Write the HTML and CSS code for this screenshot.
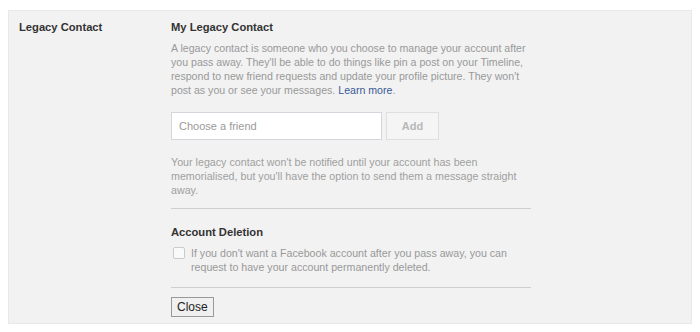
FILE: index.html
```html
<!DOCTYPE html>
<html>
<head>
<meta charset="utf-8">
<link rel="stylesheet" href="styles.css">
</head>
<body>
<div class="panel">
  <div class="label">Legacy Contact</div>
  <div class="content">
    <div class="title">My Legacy Contact</div>
    <p class="desc">A legacy contact is someone who you choose to manage your account after you pass away. They'll be able to do things like pin a post on your Timeline, respond to new friend requests and update your profile picture. They won't post as you or see your messages. <a class="link" href="#">Learn more</a>.</p>
    <div class="picker">
      <div class="input">Choose a friend</div>
      <div class="add">Add</div>
    </div>
    <p class="note">Your legacy contact won't be notified until your account has been memorialised, but you'll have the option to send them a message straight away.</p>
    <div class="divider"></div>
    <div class="title title2">Account Deletion</div>
    <div class="check-row">
      <span class="checkbox"></span>
      <span class="check-text">If you don't want a Facebook account after you pass away, you can request to have your account permanently deleted.</span>
    </div>
    <div class="divider divider2"></div>
    <div class="close">Close</div>
  </div>
</div>
</body>
</html>
```

FILE: styles.css
```css
html, body {
  margin: 0;
  padding: 0;
  background: #ffffff;
  font-family: "Liberation Sans", Arial, sans-serif;
  font-size: 11px;
}

.panel {
  margin: 10px 8px 0 8px;
  width: 682px;
  height: 312px;
  background: #f2f2f2;
  border: 1px solid #e8e8e8;
  display: flex;
}

.label {
  width: 152px;
  padding: 8px 0 0 10px;
  font-weight: bold;
  font-size: 11.2px;
  color: #333333;
  line-height: 16px;
}

.content {
  width: 360px;
  padding-top: 8px;
}

.title {
  font-weight: bold;
  font-size: 11.2px;
  color: #333333;
  line-height: 16px;
}

.desc {
  margin: 6px 0 0 0;
  font-size: 10.6px;
  color: #999999;
  line-height: 14px;
}

.link {
  color: #3b5998;
  text-decoration: none;
}

.picker {
  display: flex;
  gap: 4px;
  margin-top: 15px;
}

.input {
  width: 202px;
  height: 26px;
  background: #ffffff;
  border: 1px solid #d3d6db;
  padding-left: 7px;
  color: #9a9a9a;
  line-height: 26px;
}

.add {
  width: 51px;
  height: 26px;
  border: 1px solid #dddfe2;
  background: #f5f5f5;
  color: #b8b8b8;
  font-weight: bold;
  text-align: center;
  line-height: 26px;
}

.note {
  margin: 15px 0 0 0;
  font-size: 10.7px;
  color: #a0a0a0;
  line-height: 14px;
}

.divider {
  height: 1px;
  background: #cfcfcf;
  margin-top: 11px;
}

.title2 {
  margin-top: 15px;
}

.check-row {
  display: flex;
  margin-top: 6px;
}

.checkbox {
  flex: none;
  width: 10px;
  height: 10px;
  border: 1px solid #c9cbcf;
  border-radius: 2px;
  background: #fafafa;
  margin: 1px 6px 0 2px;
}

.check-text {
  font-size: 10.65px;
  color: #999999;
  line-height: 14px;
}

.divider2 {
  margin-top: 13px;
}

.close {
  display: inline-block;
  margin-top: 9px;
  height: 18px;
  padding: 0 5px;
  border: 1px solid #999999;
  background: #f0f0f0;
  color: #222222;
  font-size: 12px;
  line-height: 18px;
}
```
